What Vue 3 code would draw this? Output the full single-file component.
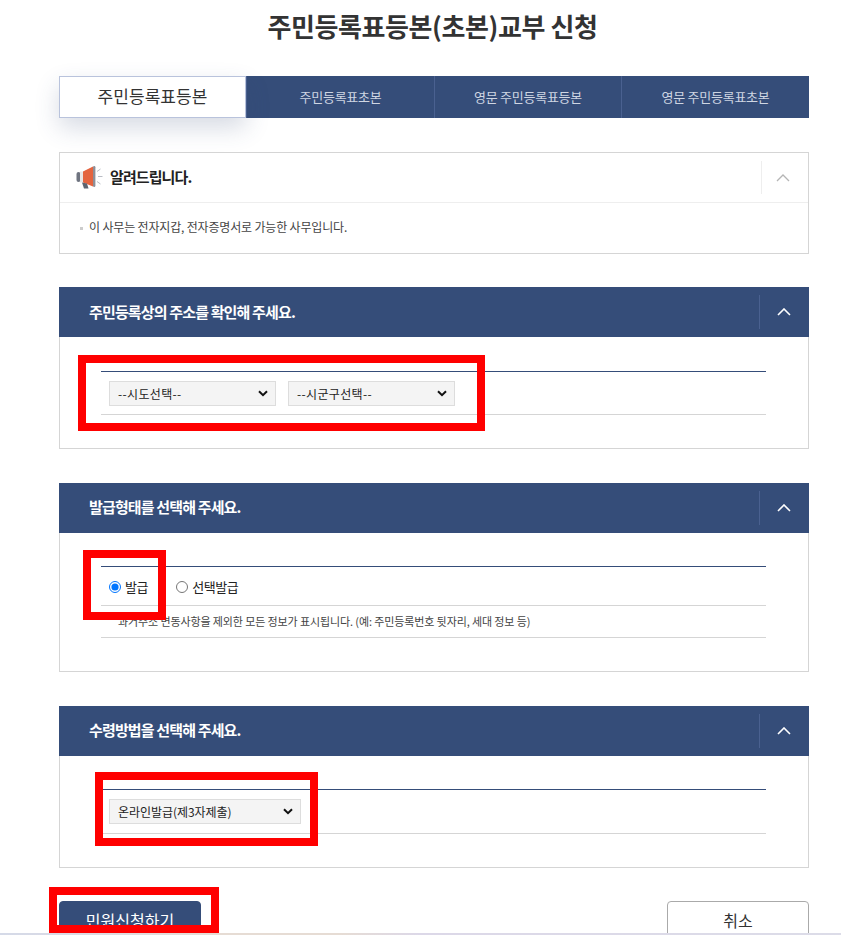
<script setup>
// 주민등록표등본 교부 신청 form
const tabs = ['주민등록표초본', '영문 주민등록표등본', '영문 주민등록표초본']
</script>

<template>
  <div class="page">
    <h1 class="title">주민등록표등본(초본)교부 신청</h1>

    <ul class="tabs">
      <li class="tab active">주민등록표등본</li>
      <li v-for="t in tabs" :key="t" class="tab">{{ t }}</li>
    </ul>

    <section class="notice">
      <div class="notice-head">
        <svg class="horn" width="28" height="24" viewBox="0 0 28 24">
          <rect x="0.5" y="7" width="4" height="10" rx="2" fill="#6f7480" />
          <rect x="4" y="6.5" width="3" height="11" fill="#e8e6e6" />
          <path d="M7 6.5 L17 1.5 V21.5 L7 17.5 Z" fill="#e4643f" />
          <rect x="17" y="1" width="2.4" height="21" rx="1.2" fill="#8d8f98" />
          <path d="M6 17.5 L11 18.5 L12.5 23.5 H8 Z" fill="#5d6470" />
          <path d="M21 6.5 L24.5 4 M22 11.5 H26.5 M21 16.5 L24.5 19" stroke="#b9bcc4" stroke-width="1" fill="none" />
        </svg>
        <strong>알려드립니다.</strong>
        <span class="toggle light">
          <svg width="14" height="8" viewBox="0 0 14 8"><path d="M1 7 L7 1 L13 7" fill="none" stroke="#b5b5b5" stroke-width="1.3" /></svg>
        </span>
      </div>
      <p class="notice-body"><i class="dot"></i>이 사무는 전자지갑, 전자증명서로 가능한 사무입니다.</p>
    </section>

    <section class="panel first">
      <div class="panel-head">
        <strong>주민등록상의 주소를 확인해 주세요.</strong>
        <span class="toggle">
          <svg width="14" height="8" viewBox="0 0 14 8"><path d="M1 7 L7 1 L13 7" fill="none" stroke="#fff" stroke-width="1.6" /></svg>
        </span>
      </div>
      <div class="panel-body b1">
        <div class="row selects">
          <select class="sel w167"><option>--시도선택--</option></select>
          <select class="sel w167"><option>--시군구선택--</option></select>
        </div>
      </div>
    </section>

    <section class="panel second">
      <div class="panel-head">
        <strong>발급형태를 선택해 주세요.</strong>
        <span class="toggle">
          <svg width="14" height="8" viewBox="0 0 14 8"><path d="M1 7 L7 1 L13 7" fill="none" stroke="#fff" stroke-width="1.6" /></svg>
        </span>
      </div>
      <div class="panel-body b2">
        <div class="row radios">
          <label class="radio"><input type="radio" name="kind" checked />발급</label>
          <label class="radio"><input type="radio" name="kind" />선택발급</label>
        </div>
        <p class="desc">과거주소 변동사항을 제외한 모든 정보가 표시됩니다. (예: 주민등록번호 뒷자리, 세대 정보 등)</p>
      </div>
    </section>

    <section class="panel third">
      <div class="panel-head">
        <strong>수령방법을 선택해 주세요.</strong>
        <span class="toggle">
          <svg width="14" height="8" viewBox="0 0 14 8"><path d="M1 7 L7 1 L13 7" fill="none" stroke="#fff" stroke-width="1.6" /></svg>
        </span>
      </div>
      <div class="panel-body b2">
        <div class="row selects tall">
          <select class="sel w192"><option>온라인발급(제3자제출)</option></select>
        </div>
      </div>
    </section>

    <div class="actions">
      <button class="btn primary">민원신청하기</button>
      <button class="btn">취소</button>
    </div>

    <div class="mark m1"></div>
    <div class="mark m2"></div>
    <div class="mark m3"></div>
    <div class="mark m4"></div>
    <div class="strip"></div>
  </div>
</template>

<style>
html, body { margin: 0; background: #fff; overflow: hidden; }
</style>

<style scoped>
.page {
  position: relative;
  box-sizing: border-box;
  width: 841px;
  height: 935px;
  overflow: hidden;
  padding: 0 32px 0 59px;
  background: #fff;
  font-family: "Noto Sans CJK KR", "Noto Sans", sans-serif;
  color: #222;
}
.title {
  margin: 0 -32px 0 -35px;
  height: 76px;
  padding-top: 6px;
  box-sizing: border-box;
  text-align: center;
  font-size: 26px;
  line-height: 40px;
  font-weight: 700;
  color: #333;
  letter-spacing: -0.4px;
}
.tabs {
  display: grid;
  grid-template-columns: 187px 188px 187px 188px;
  height: 42px;
  margin: 0;
  padding: 0;
  list-style: none;
  background: #354d79;
}
.tab {
  display: flex;
  align-items: center;
  justify-content: center;
  padding-bottom: 2px;
  font-size: 13px;
  color: #cfd6e3;
  letter-spacing: -0.25px;
  border-left: 1px solid #4a6190;
}
.tab.active {
  background: #fff;
  color: #333;
  padding-bottom: 3px;
  font-size: 17px;
  letter-spacing: 0.1px;
  border: 1px solid #b9c3dc;
  box-shadow: 0 10px 25px rgba(53, 77, 121, 0.2);
  position: relative;
}
.notice {
  margin-top: 34px;
  height: 102px;
  box-sizing: border-box;
  border: 1px solid #d5d5d5;
}
.notice-head {
  position: relative;
  display: flex;
  align-items: center;
  height: 50px;
  box-sizing: border-box;
  padding: 0 0 2px 16px;
  border-bottom: 1px solid #eee;
  font-size: 15px;
  letter-spacing: -0.9px;
}
.horn { margin-right: 6px; }
.toggle {
  position: absolute;
  right: 0;
  top: 8px;
  width: 47px;
  height: 33px;
  box-sizing: border-box;
  display: flex;
  align-items: center;
  justify-content: center;
  border-left: 1px solid #4a6190;
}
.toggle.light { border-left-color: #eee; padding-right: 4px; }
.notice-body {
  margin: 0;
  padding: 15px 0 0 20px;
  font-size: 12px;
  line-height: 18px;
  color: #444;
  letter-spacing: -0.17px;
}
.dot {
  display: inline-block;
  width: 3px;
  height: 3px;
  margin-right: 6px;
  vertical-align: middle;
  background: #ccc;
}
.panel { border: 1px solid #d5d5d5; border-top: 0; box-sizing: border-box; }
.first { margin-top: 33px; height: 162px; }
.second { margin-top: 34px; height: 189px; }
.third { margin-top: 34px; height: 162px; }
.panel-head {
  position: relative;
  display: flex;
  align-items: center;
  height: 50px;
  margin: 0 -1px;
  padding: 0 0 1px 30px;
  box-sizing: border-box;
  background: #354d79;
  color: #fff;
  font-size: 15px;
  letter-spacing: -0.85px;
}
.second .panel-head, .third .panel-head { padding-bottom: 3px; }
.panel-head .toggle { top: 8px; width: 50px; height: 34px; padding-right: 2px; }
.panel-body { padding: 34px 42px 0 41px; }
.panel-body.b2 { padding-top: 33px; }
.row {
  display: flex;
  align-items: center;
  box-sizing: border-box;
  border-top: 1px solid #354d79;
  border-bottom: 1px solid #d5d5d5;
}
.selects { height: 44px; padding-left: 8px; gap: 12px; }
.selects.tall { height: 45px; }
.sel {
  height: 25px;
  box-sizing: border-box;
  padding: 0 24px 0 8px;
  border: 1px solid #ddd;
  border-radius: 0;
  appearance: none;
  background-color: #f4f4f4;
  background-image: url("data:image/svg+xml,%3Csvg xmlns='http://www.w3.org/2000/svg' width='10' height='7' viewBox='0 0 10 7'%3E%3Cpath d='M1 1.2 L5 5.2 L9 1.2' fill='none' stroke='%23111' stroke-width='2'/%3E%3C/svg%3E");
  background-repeat: no-repeat;
  background-position: right 7px center;
  font-family: inherit;
  font-size: 12px;
  letter-spacing: 0.35px;
  color: #222;
}
.w167 { width: 167px; }
.w192 { width: 192px; letter-spacing: -0.05px; }
.radios { height: 40px; padding-left: 8px; gap: 28px; }
.radio {
  display: flex;
  align-items: center;
  font-size: 13px;
  letter-spacing: -0.4px;
  color: #222;
}
.radio input { width: 12px; height: 12px; margin: 1px 4px 0 0; }
.desc {
  margin: 0;
  height: 32px;
  box-sizing: border-box;
  padding-left: 17px;
  border-bottom: 1px solid #d5d5d5;
  font-size: 11px;
  line-height: 30px;
  letter-spacing: -0.11px;
  color: #444;
}
.actions {
  display: flex;
  justify-content: space-between;
  margin-top: 33px;
}
.btn {
  width: 142px;
  height: 44px;
  box-sizing: border-box;
  border: 1px solid #aaa;
  border-radius: 4px;
  background: #fff;
  font-family: inherit;
  font-size: 16px;
  padding: 0 0 7px;
  color: #333;
}
.primary { background: #354d79; border-color: #354d79; color: #fff; }
.mark { position: absolute; box-sizing: border-box; border: 8px solid #f00; }
.m1 { left: 78px; top: 355px; width: 407px; height: 76px; }
.m2 { left: 83px; top: 550px; width: 83px; height: 70px; }
.m3 { left: 95px; top: 772px; width: 223px; height: 74px; }
.m4 { left: 49px; top: 887px; width: 170px; height: 46px; }
.strip {
  position: absolute;
  left: 0;
  right: 0;
  bottom: 0;
  height: 2px;
  background: linear-gradient(90deg, #d5dae8 0, #d8dae6 50px, #e6dcd4 220px, #e6dcd4 340px, #dcd8e8 420px, #dcdce8 100%);
}
</style>
